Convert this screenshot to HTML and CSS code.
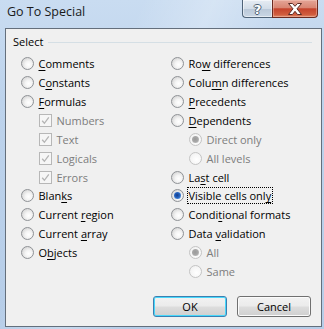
FILE: index.html
```html
<!DOCTYPE html>
<html>
<head>
<meta charset="utf-8">
<link rel="stylesheet" href="styles.css">
</head>
<body>
<div class="window">
  <div class="titlebar">
    <span class="title">Go To Special</span>
    <div class="caption-btns">
      <div class="cbtn help"><span class="q">?</span></div>
      <div class="cbtn close">
        <svg width="16" height="12" viewBox="0 0 16 12"><path d="M1.5 0.5 H5.5 L8 3.3 L10.5 0.5 H14.5 L10 5.8 L14.5 11.5 H10.5 L8 8.3 L5.5 11.5 H1.5 L6 5.8 Z" fill="#fff" stroke="#5a2a24" stroke-width="1" stroke-linejoin="round"/></svg>
      </div>
    </div>
  </div>
  <div class="client">
    <div class="group-head"><span class="group-label">Select</span><div class="group-line"></div></div>
    <div class="options">
      <div class="col">
        <div class="row"><span class="radio"></span><span class="lbl"><u>C</u>omments</span></div>
        <div class="row"><span class="radio"></span><span class="lbl">C<u>o</u>nstants</span></div>
        <div class="row"><span class="radio"></span><span class="lbl"><u>F</u>ormulas</span></div>
        <div class="row sub"><span class="check"><svg width="11" height="11" viewBox="0 0 11 11"><path d="M2.2 5.8 L4.4 8.3 L8.8 2.4" fill="none" stroke="#b4b4b4" stroke-width="1.3"/></svg></span><span class="lbl dis">Numbers</span></div>
        <div class="row sub"><span class="check"><svg width="11" height="11" viewBox="0 0 11 11"><path d="M2.2 5.8 L4.4 8.3 L8.8 2.4" fill="none" stroke="#b4b4b4" stroke-width="1.3"/></svg></span><span class="lbl dis">Text</span></div>
        <div class="row sub"><span class="check"><svg width="11" height="11" viewBox="0 0 11 11"><path d="M2.2 5.8 L4.4 8.3 L8.8 2.4" fill="none" stroke="#b4b4b4" stroke-width="1.3"/></svg></span><span class="lbl dis">Logicals</span></div>
        <div class="row sub"><span class="check"><svg width="11" height="11" viewBox="0 0 11 11"><path d="M2.2 5.8 L4.4 8.3 L8.8 2.4" fill="none" stroke="#b4b4b4" stroke-width="1.3"/></svg></span><span class="lbl dis">Errors</span></div>
        <div class="row"><span class="radio"></span><span class="lbl">Blan<u>k</u>s</span></div>
        <div class="row"><span class="radio"></span><span class="lbl">Current <u>r</u>egion</span></div>
        <div class="row"><span class="radio"></span><span class="lbl">Current <u>a</u>rray</span></div>
        <div class="row"><span class="radio"></span><span class="lbl">O<u>b</u>jects</span></div>
      </div>
      <div class="col">
        <div class="row"><span class="radio"></span><span class="lbl">Ro<u>w</u> differences</span></div>
        <div class="row"><span class="radio"></span><span class="lbl">Colu<u>m</u>n differences</span></div>
        <div class="row"><span class="radio"></span><span class="lbl"><u>P</u>recedents</span></div>
        <div class="row"><span class="radio"></span><span class="lbl"><u>D</u>ependents</span></div>
        <div class="row sub"><span class="radio disabled selected"></span><span class="lbl dis">Direct only</span></div>
        <div class="row sub"><span class="radio disabled"></span><span class="lbl dis">All levels</span></div>
        <div class="row"><span class="radio"></span><span class="lbl">La<u>s</u>t cell</span></div>
        <div class="row"><span class="radio selected"></span><span class="lbl focus">Visible cells onl<u>y</u></span></div>
        <div class="row"><span class="radio"></span><span class="lbl">Condi<u>t</u>ional formats</span></div>
        <div class="row"><span class="radio"></span><span class="lbl">Data <u>v</u>alidation</span></div>
        <div class="row sub"><span class="radio disabled selected"></span><span class="lbl dis">All</span></div>
        <div class="row sub"><span class="radio disabled"></span><span class="lbl dis">Same</span></div>
      </div>
    </div>
    <div class="buttons">
      <button class="btn default">OK</button>
      <button class="btn">Cancel</button>
    </div>
  </div>
</div>
</body>
</html>
```
FILE: styles.css
```css
* { box-sizing: border-box; }
html, body { margin: 0; padding: 0; }
body {
  width: 324px;
  height: 329px;
  overflow: hidden;
  font-family: "Open Sans", "Noto Sans", sans-serif;
  font-size: 11px;
  color: #000;
}
.window {
  width: 324px;
  height: 329px;
  padding: 0 2px 2px 5px;
  display: flex;
  flex-direction: column;
  background:
    linear-gradient(115deg, rgba(255,255,255,0) 30%, rgba(255,255,255,0.25) 45%, rgba(255,255,255,0) 60%),
    linear-gradient(180deg, #c9dcf1 0%, #bdd3ec 30%, #b6cde8 100%);
}
.titlebar {
  height: 28px;
  display: flex;
  align-items: flex-start;
  justify-content: space-between;
  flex: none;
}
.title {
  font-family: "Open Sans", "Noto Sans", sans-serif;
  font-size: 12.5px;
  line-height: 16px;
  margin: 4px 0 0 2px;
  color: #1a1a1a;
}
.caption-btns {
  display: flex;
  margin-right: 4px;
  height: 18px;
}
.cbtn {
  height: 18px;
  border: 1px solid #4f6378;
  border-top: none;
  display: flex;
  align-items: center;
  justify-content: center;
}
.help {
  width: 30px;
  border-radius: 0 0 0 4px;
  border-right: none;
  background: linear-gradient(180deg, #e6ecf3 0%, #d3dde8 50%, #bac8d8 52%, #c9d6e4 100%);
  box-shadow: inset 0 0 0 1px rgba(255,255,255,0.5);
}
.q {
  font-family: "DejaVu Sans", sans-serif;
  font-weight: bold;
  font-size: 13px;
  line-height: 13px;
  color: #fff;
  text-shadow: 1px 0 0 #4d5f73, -1px 0 0 #4d5f73, 0 1px 0 #4d5f73, 0 -1px 0 #4d5f73;
  margin-top: 1px;
}
.close {
  width: 46px;
  border-color: #6b2a20;
  border-radius: 0 0 4px 0;
  background: linear-gradient(180deg, #e4a597 0%, #d98673 45%, #c5432c 52%, #d05c3e 85%, #e08a6a 100%);
  box-shadow: inset 0 0 0 1px rgba(255,220,210,0.35);
}
.close svg { display: block; margin-top: 1px; }
.client {
  flex: 1;
  background: #f0f0f0;
  border: 1px solid #646f7c;
  display: flex;
  flex-direction: column;
}
.group-head {
  display: flex;
  align-items: center;
  margin-top: 5px;
  padding-left: 7px;
  padding-right: 9px;
  height: 16px;
}
.group-label { line-height: 16px; }
.group-line {
  flex: 1;
  height: 1px;
  background: #d5dfe5;
  margin-left: 5px;
}
.options {
  display: grid;
  grid-template-columns: 150px 1fr;
  padding-left: 14.5px;
  margin-top: 4.5px;
}
.col { display: flex; flex-direction: column; }
.row {
  height: 18.87px;
  display: flex;
  align-items: center;
}
.row.sub { padding-left: 18px; }
.lbl {
  margin-left: 5px;
  line-height: 15px;
  white-space: nowrap;
}
.lbl u { text-underline-offset: 2px; text-decoration-thickness: 1px; }
.lbl.dis { color: #7d7d7d; }
.lbl.focus {
  outline: 1px dotted #000;
  outline-offset: 0;
  padding: 0 1px;
  margin-left: 4px;
}
.radio {
  width: 13px;
  height: 13px;
  border-radius: 50%;
  border: 1px solid #8f9296;
  background: radial-gradient(circle at 60% 60%, #ffffff 0%, #f4f4f4 35%, #dcdcdc 70%, #c9c9c9 100%);
  position: relative;
  flex: none;
}
.radio.disabled {
  border-color: #c4c4c4;
  background: radial-gradient(circle at 60% 60%, #ffffff 0%, #f7f7f7 50%, #ececec 100%);
}
.radio.selected::after {
  content: "";
  position: absolute;
  left: 2px;
  top: 2px;
  width: 7px;
  height: 7px;
  border-radius: 50%;
  background: radial-gradient(circle at 45% 45%, #173d86 0%, #2361bf 45%, #79b4ec 100%);
}
.radio.disabled.selected::after {
  background: radial-gradient(circle at 45% 45%, #9a9a9a 0%, #a8a8a8 50%, #d4d4d4 100%);
}
.check {
  width: 13px;
  height: 13px;
  border: 1px solid #b7b7b7;
  background: #f6f6f6;
  flex: none;
  display: flex;
  align-items: center;
  justify-content: center;
}
.check svg { display: block; }
.buttons {
  display: flex;
  justify-content: flex-end;
  gap: 10px;
  padding-right: 10px;
  margin-top: 15.5px;
}
.btn {
  width: 74px;
  height: 21px;
  font-family: "Open Sans", "Noto Sans", sans-serif;
  font-size: 11px;
  color: #000;
  border: 1px solid #707070;
  border-radius: 3px;
  padding: 0;
  background: linear-gradient(180deg, #f2f2f2 0%, #ebebeb 48%, #dddddd 52%, #cfcfcf 100%);
  box-shadow: inset 0 0 0 1px #fbfbfb;
}
.btn.default {
  border-color: #3c7fb1;
  box-shadow: inset 0 0 0 1px #48d8fb;
}
```
